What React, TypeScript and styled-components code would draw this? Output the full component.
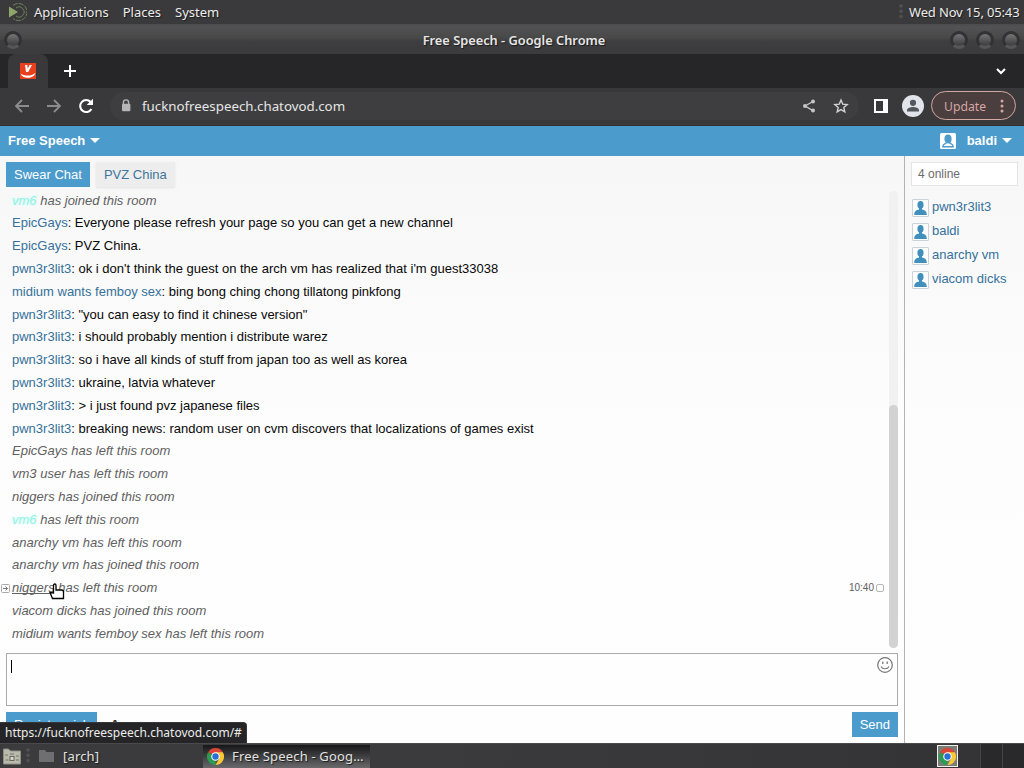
import React, { useState } from 'react';
import styled, { createGlobalStyle, css } from 'styled-components';

const GlobalStyle = createGlobalStyle`
  * {
    box-sizing: border-box;
  }

  body {
    margin: 0;
    overflow: hidden;
  }
`;

const uiFont = css`
  font-family: 'Noto Sans', sans-serif;
  font-size: 13px;
`;

const Desktop = styled.div`
  position: relative;
  display: flex;
  flex-direction: column;
  width: 1024px;
  height: 768px;
  overflow: hidden;
  background: #3b3b3d;
  white-space: nowrap;
`;

const Panel = styled.header`
  ${uiFont}
  display: flex;
  align-items: center;
  height: 24px;
  padding: 0 5px 0 8px;
  background: #3a3a3c;
  color: #ececec;
  text-shadow: 1px 1px 1px #1c1c1c;
`;

const MenuItem = styled.span`
  margin-left: 14px;

  &:first-of-type {
    margin-left: 7px;
  }
`;

const Clock = styled.span`
  width: 110px;
  margin-left: 6px;
  letter-spacing: -0.15px;
`;

const Grip = styled.i`
  width: 4px;
  height: 16px;
  background: radial-gradient(circle at 2px 2px, #505052 1.5px, transparent 2px) 0 0 / 4px 5.3px;
`;

const Spacer = styled.div`
  flex: 1;
`;

const TitleBar = styled.div`
  ${uiFont}
  display: grid;
  grid-template-columns: 90px 1fr 90px;
  align-items: center;
  height: 30px;
  padding: 2px 4px 0;
  background: linear-gradient(#4b4b4d 0, #525254 3px, #484849 14px, #3e3e40 17px, #3b3b3d 100%);
  color: #e6e6e6;
  font-weight: 600;
  font-size: 12.8px;
  text-align: center;
  text-shadow: 1px 1px 1px #1c1c1c;
`;

const WindowTitle = styled.span`
  padding-left: 4px;
`;

const Orbs = styled.div<{ $end?: boolean }>`
  display: flex;
  gap: 8px;
  justify-content: ${props => (props.$end ? 'flex-end' : 'flex-start')};
`;

const Orb = styled.i`
  width: 18px;
  height: 18px;
  border: 3.5px solid #323233;
  border-bottom-color: #565657;
  border-radius: 50%;
  background: linear-gradient(#767678, #454547 80%);
`;

const TabStrip = styled.div`
  display: flex;
  align-items: center;
  height: 34px;
  padding: 0 16px 0 8px;
  background: #262628;
  color: #fff;
`;

const BrowserTab = styled.div`
  display: flex;
  align-items: center;
  justify-content: center;
  align-self: stretch;
  width: 40px;
  margin-right: 15px;
  border-radius: 8px 8px 0 0;
  background: #39393b;
`;

const TabSearch = styled.div`
  display: flex;
  margin-left: auto;
`;

const Toolbar = styled.div`
  ${uiFont}
  display: flex;
  align-items: center;
  height: 38px;
  padding: 0 8px 2px 14px;
  background: #39393b;
  color: #ececec;
  border-bottom: 1px solid #303032;
`;

const NavIcons = styled.div`
  display: flex;
  gap: 16px;
`;

const AddressBar = styled.div`
  display: flex;
  flex: 1;
  align-items: center;
  height: 28px;
  margin: 0 15px 0 16px;
  padding: 0 10px 0 11px;
  border-radius: 14px;
  background: #3e3e40;
  color: #e6e6e6;
  font-size: 13.3px;
`;

const Address = styled.span`
  flex: 1;
  margin-left: 11px;
`;

const AddressActions = styled.div`
  display: flex;
  gap: 16px;
`;

const Avatar = styled.div`
  display: flex;
  margin: 0 7px 0 14px;
`;

const UpdateButton = styled.button`
  ${uiFont}
  display: flex;
  align-items: center;
  justify-content: space-between;
  width: 85px;
  height: 29px;
  padding: 1px 11px 0 12px;
  border: 1px solid #d3a8a2;
  border-radius: 15px;
  background: #4b3e3f;
  color: #d5a6a2;
  font-size: 12.2px;
`;

const ChatHeader = styled.div`
  display: flex;
  align-items: center;
  height: 30px;
  padding: 0 12px 1px 8px;
  background: #4b9bcc;
  color: #fff;
  font: bold 13px 'Liberation Sans', sans-serif;
`;

const Caret = styled.i`
  margin-left: 5px;
  border: 5px solid transparent;
  border-top-color: currentColor;
  border-bottom: 0;
`;

const Account = styled.div`
  display: flex;
  align-items: center;
  gap: 11px;
  margin-left: auto;
`;

const AccountName = styled.span`
  display: flex;
  align-items: center;
`;

const Chat = styled.main`
  display: flex;
  flex: 1;
  min-height: 0;
  background: linear-gradient(#f7f7f8, #fdfdfd 45%, #fefefe);
  color: #111;
  font: 13px 'Liberation Sans', sans-serif;
`;

const Room = styled.section`
  display: flex;
  flex: 1;
  flex-direction: column;
  padding: 6px 6px 6px 0;
`;

const RoomTabs = styled.div`
  display: flex;
  gap: 6px;
  padding-left: 6px;
`;

const RoomTab = styled.button<{ $active: boolean }>`
  height: 25px;
  padding: 0 8px;
  border: 0;
  background: ${props => (props.$active ? '#4b9bcc' : '#ededee')};
  color: ${props => (props.$active ? '#fff' : '#40759a')};
  font: inherit;
  box-shadow: ${props => (props.$active ? 'none' : '0 1px 2px #e2e2e2')};
`;

const Log = styled.div`
  display: flex;
  flex: 1;
  min-height: 0;
  margin-top: 1.7px;
`;

const Messages = styled.div`
  flex: 1;
`;

const Message = styled.div<{ $event?: boolean }>`
  display: flex;
  align-items: center;
  height: 22.8px;
  padding-right: 5px;
  color: ${props => (props.$event ? '#606060' : '#080808')};
  font-style: ${props => (props.$event ? 'italic' : 'normal')};
  white-space: pre;
`;

const Gutter = styled.span`
  display: flex;
  width: 12px;
`;

const Nick = styled.span<{ $color: string; $underline?: boolean; $glow?: boolean }>`
  color: ${props => props.$color};
  text-decoration: ${props => (props.$underline ? 'underline' : 'none')};
  text-decoration-skip-ink: none;
  text-shadow: ${props => (props.$glow ? '0 0 3px #c5f8f0' : 'none')};
`;

const Time = styled.span`
  display: flex;
  align-items: center;
  gap: 2px;
  margin-left: auto;
  color: #606060;
  font-size: 10px;
  font-style: normal;
`;

const Check = styled.i`
  width: 8px;
  height: 8px;
  border: 1px solid #b5b5b5;
  border-radius: 2px;
`;

const ScrollTrack = styled.div`
  display: flex;
  align-items: flex-end;
  width: 9px;
  height: 457px;
  margin-top: 2px;
  border-radius: 5px;
  background: #f1f1f1;
`;

const ScrollThumb = styled.div`
  width: 9px;
  height: 243px;
  border-radius: 5px;
  background: #d2d2d2;
`;

const MessageBox = styled.div`
  display: flex;
  justify-content: space-between;
  height: 53px;
  margin-left: 6px;
  padding: 3px 4px;
  border: 1px solid #aaa;
  background: #fefefe;
`;

const TextCursor = styled.i`
  width: 1px;
  height: 13px;
  margin-top: 3px;
  background: #000;
`;

const Actions = styled.div`
  display: flex;
  align-items: center;
  margin: 6px 0 0 6px;
`;

const ActionButton = styled.button`
  height: 25px;
  padding: 0 8px;
  border: 0;
  background: #4b9bcc;
  color: #fff;
  font: inherit;
`;

const FontToggle = styled.span`
  flex: 1;
  margin-left: 13px;
  color: #333;
  font-weight: bold;
`;

const Users = styled.aside`
  display: flex;
  flex-direction: column;
  width: 120px;
  padding: 6px 6px 0 6px;
  border-left: 1px solid #b3b3b6;
`;

const OnlineCount = styled.div`
  height: 24px;
  margin-bottom: 8px;
  padding: 4px 6px;
  border: 1px solid #e4e4e6;
  background: #fff;
  color: #6c6c6c;
  font-size: 12px;
`;

const User = styled.div`
  display: flex;
  align-items: center;
  gap: 3px;
  height: 24px;
  padding-left: 1px;
  color: #35719a;
`;

const UserIcon = styled.span`
  display: flex;
  margin-top: 3px;
  border: 1px solid #ccd3d8;
  border-radius: 1px;
  background: #fff;
`;

const Taskbar = styled.footer`
  ${uiFont}
  display: flex;
  align-items: center;
  height: 25px;
  padding-left: 2px;
  border-top: 1px solid #4a4a4c;
  background: linear-gradient(90deg, #3b3b3d 40%, #333335);
  color: #e2e2e2;
`;

const Task = styled.div<{ $active?: boolean; $width: number }>`
  display: flex;
  align-items: center;
  gap: 8px;
  width: ${props => props.$width}px;
  height: 23px;
  padding-left: 4px;
  background: ${props => (props.$active ? 'linear-gradient(#171719, #69696b)' : 'transparent')};
  text-shadow: 1px 1px 1px #1c1c1c;
`;

const TaskLabel = styled.span`
  letter-spacing: 0.17px;
`;

const Tray = styled.div`
  display: flex;
  align-self: stretch;
  margin-left: auto;
`;

const TrayIcon = styled.span`
  display: flex;
  width: 21px;
  height: 22px;
  margin: 1px 22px 0 0;
  padding: 2px 1px;
  border: 1px solid #f0f0e8;
  background: #7b7b78;
`;

const Workspace = styled.i`
  width: 22px;
  border-left: 1px solid #454547;
  background: #29292b;
`;

const StatusBubble = styled.div`
  ${uiFont}
  position: absolute;
  left: 0;
  bottom: 25px;
  width: 247px;
  height: 21px;
  padding: 0 5px;
  border: 1px solid #38383a;
  border-width: 1px 1px 0 0;
  border-top-right-radius: 4px;
  background: #252527;
  color: #ececec;
  font-size: 12px;
  line-height: 19px;
`;

const Pointer = styled.svg`
  position: absolute;
  left: 49px;
  top: 583px;
`;

const ArrowIcon = ({ forward }: { forward?: boolean }) => (
  <svg width="16" height="16" viewBox="0 0 16 16" fill="none" stroke="#8c8c8e" strokeWidth="1.8">
    <path d={forward ? 'M1 8h13M8 2l6 6-6 6' : 'M15 8H2M8 2L2 8l6 6'} />
  </svg>
);

const ReloadIcon = () => (
  <svg width="16" height="16" viewBox="0 0 16 16">
    <path d="M13.4 11A6 6 0 1 1 12.6 4" fill="none" stroke="#fff" strokeWidth="2.1" />
    <path d="M15 .7V7H8.7z" fill="#fff" />
  </svg>
);

const LockIcon = () => (
  <svg width="10" height="13" viewBox="0 0 10 13">
    <path d="M2.4 5V3.5a2.6 2.6 0 0 1 5.2 0V5" fill="none" stroke="#b5b5b7" strokeWidth="1.4" />
    <rect x="1" y="4.7" width="8.4" height="7.5" rx="1" fill="#b5b5b7" />
  </svg>
);

const ShareIcon = () => (
  <svg width="16" height="16" viewBox="0 0 16 16" fill="#c5c5c7">
    <path d="M12 3.5L4 8l8 4.7" fill="none" stroke="#c5c5c7" strokeWidth="1.4" />
    <circle cx="12" cy="3.5" r="2" />
    <circle cx="4" cy="8" r="2" />
    <circle cx="12" cy="12.6" r="2" />
  </svg>
);

const StarIcon = () => (
  <svg width="16" height="16" viewBox="0 0 16 16">
    <path d="M8 2l1.7 4.1 4.5.4-3.4 3 1 4.4L8 11.6l-3.8 2.3 1-4.4-3.4-3 4.5-.4z" fill="none" stroke="#d2d2d4" strokeWidth="1.4" />
  </svg>
);

const ProfileIcon = () => (
  <svg width="22" height="22" viewBox="0 0 22 22">
    <circle cx="11" cy="11" r="11" fill="#e1e4eb" />
    <circle cx="11" cy="7.8" r="3.1" fill="#51565f" />
    <path d="M5 16.5v-1.2c0-2.3 3.5-3.3 6-3.3s6 1 6 3.3v1.2z" fill="#51565f" />
  </svg>
);

const PersonIcon = () => (
  <svg width="15" height="16" viewBox="0 0 15 16" fill="#408fbd">
    <ellipse cx="7.5" cy="4.8" rx="3.1" ry="3.9" />
    <path d="M6 7h3v2.5c3 .6 4.700 1.800 4.700 4.300V15H1.300v-1.200C1.300 11.300 3 10.100 6 9.500z" />
  </svg>
);

const AccountIcon = () => (
  <svg width="16" height="16" viewBox="0 0 16 16">
    <rect width="16" height="16" rx="1.5" fill="#fff" />
    <ellipse cx="8" cy="6" rx="2.9" ry="3.8" fill="none" stroke="#4b9bcc" strokeWidth="1.4" />
    <path d="M6.500 9.500c0 1.500-3.700 1-3.700 4.300h10.400c0-3.300-3.700-2.800-3.700-4.300" fill="none" stroke="#4b9bcc" strokeWidth="1.4" />
    <ellipse cx="8" cy="6" rx="2.6" ry="3.500" fill="#4b9bcc" />
  </svg>
);

const ChromeIcon = () => (
  <svg width="17" height="17" viewBox="0 0 16 16">
    <path d="M8 8L1.070 4a8 8 0 0 1 13.860 0z" fill="#dc4437" />
    <path d="M8 8v8A8 8 0 0 1 1.070 4z" fill="#2b9b51" />
    <path d="M8 4h6.930A8 8 0 0 1 8 16l3.500-6z" fill="#f9c834" />
    <circle cx="8" cy="8" r="4" fill="#fff" />
    <circle cx="8" cy="8" r="3" fill="#2b6fd6" />
  </svg>
);

const MateIcon = () => (
  <svg width="19" height="18" viewBox="0 0 19 18" fill="none" stroke="#6f8258" strokeWidth="1">
    <path d="M1 3.500l9 5.500-9 5.500z" fill="#8fa56c" stroke="none" />
    <path d="M5 2.500A8.500 8.500 0 1 1 5 15.500" strokeDasharray="5 1" />
    <path d="M8 5a5 5 0 1 1 0 8" />
  </svg>
);

const FaviconIcon = () => (
  <svg width="16" height="16" viewBox="0 0 16 16">
    <rect width="16" height="16" fill="#e8401c" />
    <path d="M5 2h2.300l.4 3.700L9.500 2H12L8.200 9H6z" fill="#fff" />
    <path d="M.5 10.500c4 2.800 11 2.800 15-.5-1.500 6-13 6.500-15 .5z" fill="#fff" />
  </svg>
);

const SmileIcon = () => (
  <svg width="16" height="16" viewBox="0 0 16 16" fill="none" stroke="#777">
    <circle cx="8" cy="8" r="7.3" strokeWidth="1.2" />
    <path d="M4 9.500c1.500 3 6.500 3 8 0" strokeWidth="1.2" />
    <path d="M5.800 4.500v2.500M10.200 4.500v2.500" strokeWidth="1.3" />
  </svg>
);

const FileManagerIcon = () => (
  <svg width="20" height="17" viewBox="0 0 20 17">
    <path d="M1.500 1h5l2 2h10v13h-17z" fill="#b9baac" stroke="#8e8f84" />
    <path d="M3 7h3M8 6h4M14 8h3M3.500 12h3M14 12h3" stroke="#74756c" />
    <rect x="8" y="8.500" width="4" height="4" fill="#d6d7cc" stroke="#66675f" />
  </svg>
);

const FolderIcon = () => (
  <svg width="17" height="14" viewBox="0 0 17 14">
    <path d="M1 1h6l1.500 2H16v10H1z" fill="#6f6f71" />
  </svg>
);

interface Line {
  nick: string;
  text: string;
  event?: boolean;
  hover?: boolean;
}

const lines: Line[] = [
  { nick: 'vm6', text: ' has joined this room', event: true },
  { nick: 'EpicGays', text: 'Everyone please refresh your page so you can get a new channel' },
  { nick: 'EpicGays', text: 'PVZ China.' },
  { nick: 'pwn3r3lit3', text: "ok i don't think the guest on the arch vm has realized that i'm guest33038" },
  { nick: 'midium wants femboy sex', text: 'bing bong ching chong tillatong pinkfong' },
  { nick: 'pwn3r3lit3', text: '"you can easy to find it chinese version"' },
  { nick: 'pwn3r3lit3', text: 'i should probably mention i distribute warez' },
  { nick: 'pwn3r3lit3', text: 'so i have all kinds of stuff from japan too as well as korea' },
  { nick: 'pwn3r3lit3', text: 'ukraine, latvia whatever' },
  { nick: 'pwn3r3lit3', text: '> i just found pvz japanese files' },
  { nick: 'pwn3r3lit3', text: 'breaking news: random user on cvm discovers that localizations of games exist' },
  { nick: 'EpicGays', text: ' has left this room', event: true },
  { nick: 'vm3 user', text: ' has left this room', event: true },
  { nick: 'niggers', text: ' has joined this room', event: true },
  { nick: 'vm6', text: ' has left this room', event: true },
  { nick: 'anarchy vm', text: ' has left this room', event: true },
  { nick: 'anarchy vm', text: ' has joined this room', event: true },
  { nick: 'niggers', text: ' has left this room', event: true, hover: true },
  { nick: 'viacom dicks', text: ' has joined this room', event: true },
  { nick: 'midium wants femboy sex', text: ' has left this room', event: true }
];

const nickColor = (line: Line) => {
  if (line.nick === 'vm6') return '#8df5e4';
  return line.event ? '#606060' : '#35719a';
};

const users = ['pwn3r3lit3', 'baldi', 'anarchy vm', 'viacom dicks'];
const rooms = ['Swear Chat', 'PVZ China'];

const App: React.FC = () => {
  const [room, setRoom] = useState('Swear Chat');

  return (
    <Desktop>
      <GlobalStyle />
      <Panel>
        <MateIcon />
        <MenuItem>Applications</MenuItem>
        <MenuItem>Places</MenuItem>
        <MenuItem>System</MenuItem>
        <Spacer />
        <Grip />
        <Clock>Wed Nov 15, 05:43</Clock>
      </Panel>

      <TitleBar>
        <Orbs><Orb /></Orbs>
        <WindowTitle>Free Speech - Google Chrome</WindowTitle>
        <Orbs $end><Orb /><Orb /><Orb /></Orbs>
      </TitleBar>

      <TabStrip>
        <BrowserTab><FaviconIcon /></BrowserTab>
        <svg width="14" height="14" viewBox="0 0 14 14" stroke="#fff" strokeWidth="2">
          <path d="M7 1v12M1 7h12" />
        </svg>
        <TabSearch>
          <svg width="14" height="10" viewBox="0 0 14 10" fill="none" stroke="#fff" strokeWidth="2">
            <path d="M3 3l4 4 4-4" />
          </svg>
        </TabSearch>
      </TabStrip>

      <Toolbar>
        <NavIcons>
          <ArrowIcon />
          <ArrowIcon forward />
          <ReloadIcon />
        </NavIcons>
        <AddressBar>
          <LockIcon />
          <Address>fucknofreespeech.chatovod.com</Address>
          <AddressActions>
            <ShareIcon />
            <StarIcon />
          </AddressActions>
        </AddressBar>
        <svg width="14" height="14" viewBox="0 0 14 14">
          <path d="M0 0h14v14H0zM2 2v10h7V2z" fill="#fff" fillRule="evenodd" />
        </svg>
        <Avatar><ProfileIcon /></Avatar>
        <UpdateButton>
          Update
          <svg width="4" height="14" viewBox="0 0 4 14" fill="#d5a6a2">
            <circle cx="2" cy="2" r="1.5" />
            <circle cx="2" cy="7" r="1.5" />
            <circle cx="2" cy="12" r="1.5" />
          </svg>
        </UpdateButton>
      </Toolbar>

      <ChatHeader>
        Free Speech
        <Caret />
        <Account>
          <AccountIcon />
          <AccountName>baldi<Caret /></AccountName>
        </Account>
      </ChatHeader>

      <Chat>
        <Room>
          <RoomTabs>
            {rooms.map((name) => (
              <RoomTab key={name} $active={room === name} onClick={() => setRoom(name)}>
                {name}
              </RoomTab>
            ))}
          </RoomTabs>
          <Log>
            <Messages>
              {lines.map((line, i) => (
                <Message key={i} $event={line.event}>
                  <Gutter>
                    {line.hover && (
                      <svg width="10" height="10" viewBox="0 0 10 10" fill="none" stroke="#777">
                        <rect x="1.5" y="1.5" width="8" height="8" rx="1" stroke="#aaa" />
                        <path d="M3 5.500h4.500M5.500 3.500l2 2-2 2" />
                      </svg>
                    )}
                  </Gutter>
                  <Nick
                    $color={nickColor(line)}
                    $underline={line.hover}
                    $glow={line.nick === 'vm6'}
                  >
                    {line.nick}
                  </Nick>
                  {line.event ? line.text : `: ${line.text}`}
                  {line.hover && <Time>10:40<Check /></Time>}
                </Message>
              ))}
            </Messages>
            <ScrollTrack><ScrollThumb /></ScrollTrack>
          </Log>
          <MessageBox>
            <TextCursor />
            <SmileIcon />
          </MessageBox>
          <Actions>
            <ActionButton>Register nick</ActionButton>
            <FontToggle>A</FontToggle>
            <ActionButton>Send</ActionButton>
          </Actions>
        </Room>
        <Users>
          <OnlineCount>4 online</OnlineCount>
          {users.map((name) => (
            <User key={name}>
              <UserIcon><PersonIcon /></UserIcon>
              {name}
            </User>
          ))}
        </Users>
      </Chat>

      <Taskbar>
        <FileManagerIcon />
        <Task $width={181}>
          <Grip />
          <FolderIcon />
          <TaskLabel>[arch]</TaskLabel>
        </Task>
        <Task $active $width={167}>
          <ChromeIcon />
          <TaskLabel>Free Speech - Goog…</TaskLabel>
        </Task>
        <Tray>
          <TrayIcon><ChromeIcon /></TrayIcon>
          <Workspace />
          <Workspace />
        </Tray>
      </Taskbar>
      <StatusBubble>https://fucknofreespeech.chatovod.com/#</StatusBubble>
      <Pointer width="16" height="18" viewBox="0 0 16 18" fill="#fff" stroke="#000" strokeWidth="1.3">
        <path d="M4.500 10V2.500c0-2 2.500-2 2.500 0V7h5.500c1 0 2 .8 2 2v6.500H3.500L1 9.500z" />
      </Pointer>
    </Desktop>
  );
};

export default App;
